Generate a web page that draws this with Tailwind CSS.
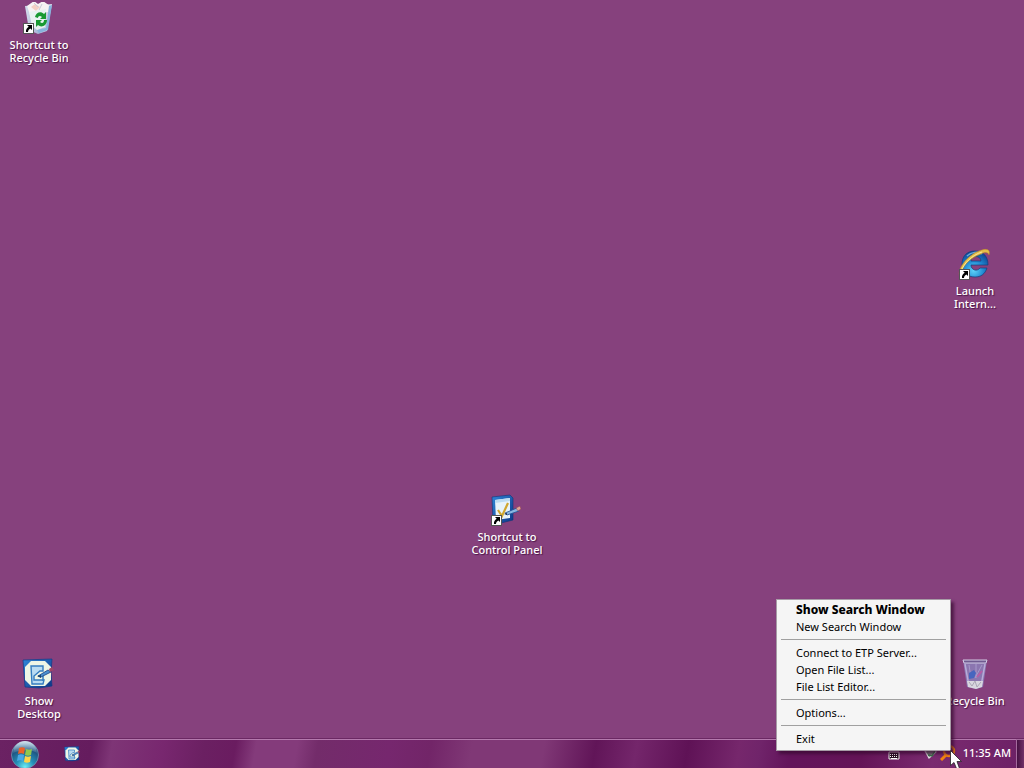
<!DOCTYPE html>
<html lang="en">
<head>
<meta charset="utf-8">
<title>Desktop</title>
<script src="https://cdn.jsdelivr.net/npm/@tailwindcss/browser@4"></script>
</head>
<body class="h-screen overflow-hidden bg-[#86417d] font-['Noto_Sans','Open_Sans',sans-serif] text-[11px] leading-[13px] text-white">

<svg class="absolute size-0" aria-hidden="true">
  <defs>
    <linearGradient id="blue" x1="0" y1="0" x2="1" y2="1"><stop offset="0" stop-color="#2f86d8"/><stop offset="1" stop-color="#0d3585"/></linearGradient>
    <linearGradient id="glass" x1="0" y1="0" x2="1" y2="0"><stop offset="0" stop-color="#dcecf8"/><stop offset=".5" stop-color="#a9c3e0"/><stop offset="1" stop-color="#e6eff8"/></linearGradient>
    <radialGradient id="ie" cx=".45" cy=".75" r=".75"><stop offset="0" stop-color="#5fd4fa"/><stop offset=".5" stop-color="#2089d2"/><stop offset="1" stop-color="#0f4390"/></radialGradient>
    <radialGradient id="orb" cx=".5" cy=".95" r=".95"><stop offset="0" stop-color="#6ff0f5"/><stop offset=".35" stop-color="#2590b8"/><stop offset=".75" stop-color="#1d4e7c"/><stop offset="1" stop-color="#7fa9c2"/></radialGradient>
    <linearGradient id="shine" x1="0" y1="0" x2="0" y2="1"><stop offset="0" stop-color="#e8f4fa" stop-opacity=".8"/><stop offset="1" stop-color="#b8d8e8" stop-opacity=".15"/></linearGradient>
    <symbol id="arrow" viewBox="0 0 11 11">
      <rect x=".5" y=".5" width="10" height="10" fill="#fff" stroke="#555"/>
      <path d="M4 2h5v5L7.400 5.400C5.800 6.200 5 7.400 5 9H3C2.600 6.700 3.800 4.800 5.700 3.700Z" fill="#000"/>
    </symbol>
    <symbol id="desk" viewBox="0 0 32 32">
      <path d="M1 2 30 1l-1 14 1 13-13 2-14-1-1-13Z" fill="url(#blue)" stroke="#123a85" stroke-width=".7"/>
      <path d="M9 3h14l6 6v13l-6 6H9l-6-6V9Z" fill="#eef6e6"/>
      <path d="M9 8h12v5h-3l-6 5v4h10l-1 4H10Z" fill="#b9dcf2" stroke="#347cc0" stroke-width="1.400"/>
      <path d="M21 17v6" stroke="#347cc0" stroke-width="1.500"/>
      <path d="m16 18 10-6 3 2-10 5Z" fill="#4a8fce" stroke="#173e80" stroke-width=".8"/>
      <path d="m27 11 3-2 2 3-4 2Z" fill="#a14566"/>
      <path d="m15 18 4-1v3Z" fill="#15406d"/>
    </symbol>
  </defs>
</svg>

<main class="relative h-full">

  <a href="#" class="absolute left-0 top-0 flex w-[78px] flex-col items-center gap-1 pt-[2px] text-center font-medium [text-shadow:1px_1px_1px_#4b1748]">
    <svg class="mr-[2px] size-8" viewBox="0 0 32 32">
      <path d="M3 4 30 2l-5 27-9 3-9-4Z" fill="url(#glass)" opacity=".9"/>
      <path d="m5 4 7-5 4 3 5-3 7 5-2 6-18 3Z" fill="#f7f3f4"/>
      <path d="m9 5 4-3 5 3-4 4Z" fill="#f4cfc5"/><path d="m12 1 4 4M20 2l-3 6" stroke="#c9cbd8" fill="none"/>
      <path d="M27 4 30 3 26 28l-9 3-2-3 9-2Z" fill="#87b4dd"/>
      <path d="m7 10 17-3-1 18-8 3-5-4Z" fill="#e7f2f1"/>
      <path d="M13 15c1-5 6-6 9-3l2-2v7h-6l2-2c-2-2-4-1-4 1ZM25 18c0 6-6 8-9 5l-2 2v-7h6l-2 2c2 2 4 1 4-2Z" fill="#189a32"/>
      <use href="#arrow" x="1" y="21" width="11" height="11"/>
    </svg>
    <span>Shortcut to<br>Recycle Bin</span>
  </a>

  <a href="#" class="absolute right-[10px] top-[246px] flex w-[78px] flex-col items-center gap-1 pt-[2px] text-center font-medium [text-shadow:1px_1px_1px_#4b1748]">
    <svg class="mr-[2px] size-8" viewBox="0 0 32 32">
      <path fill-rule="evenodd" d="M17 3c8 0 13 5 13 14H13c0 5 6 7 9 3h7c-2 6-6 9-12 9C9 29 4 24 4 16S9 3 17 3Zm-4 10h10c0-6-10-6-10 0Z" fill="url(#ie)" stroke="#123e7c" stroke-width=".7"/>
      <path d="M9 8c4-4 11-5 15-2" fill="none" stroke="#8fcdf0" stroke-width="1.500" opacity=".7"/>
      <path d="M2 29C-2 21 10 7 21 3c7-3 12-2 10 4-1-3-4-3-8-1C12 10 3 19 4 26Z" fill="#e4bd48" stroke="#b98524" stroke-width=".5"/>
      <path d="M3 24C5 16 14 7 24 4" fill="none" stroke="#f8e69a" stroke-width="1"/>
      <use href="#arrow" x="1" y="21" width="11" height="11"/>
    </svg>
    <span>Launch<br>Intern...</span>
  </a>

  <a href="#" class="absolute left-[468px] top-[492px] flex w-[78px] flex-col items-center gap-1 pt-[2px] text-center font-medium [text-shadow:1px_1px_1px_#4b1748]">
    <svg class="mr-[2px] size-8" viewBox="0 0 32 32">
      <path d="m2 3 18-2 3 3v22L7 30l-4-2Z" fill="url(#blue)" stroke="#0f3679" stroke-width=".6"/>
      <path d="m5 6 15-2v20L6 26Z" fill="#e8f3fa"/>
      <path d="m5 6 15-2v3L5 9Z" fill="#bddcf2"/>
      <path d="m8 16 4 6 6-13" fill="none" stroke="#d0a72f" stroke-width="2.200"/>
      <path d="m15 19 12-5 2 3-12 4Z" fill="#88b6e2" stroke="#224e91" stroke-width=".8"/>
      <path d="m26 14 4-2 1 3-3 2Z" fill="#e3a592" stroke="#893b52" stroke-width=".5"/>
      <path d="m14 20 3-1v2Z" fill="#263149"/>
      <use href="#arrow" x="1" y="21" width="11" height="11"/>
    </svg>
    <span>Shortcut to<br>Control Panel</span>
  </a>

  <a href="#" class="absolute bottom-[54px] left-0 flex h-[58px] w-[78px] flex-col items-center gap-1 pt-[2px] text-center font-medium [text-shadow:1px_1px_1px_#4b1748]">
    <svg class="mr-[2px] size-8 shrink-0" viewBox="0 0 32 32"><use href="#desk"/></svg>
    <span>Show<br>Desktop</span>
  </a>

  <a href="#" class="absolute bottom-[54px] right-[10px] flex h-[58px] w-[78px] flex-col items-center gap-1 pt-[2px] text-center font-medium [text-shadow:1px_1px_1px_#4b1748]">
    <svg class="mr-[2px] size-8 shrink-0" viewBox="0 0 32 32">
      <path d="m5 2 24 0-4 27-7 2-9-2Z" fill="#8c7cb6" opacity=".9"/>
      <path d="m5 2 24 0-1 3-22 0Z" fill="#6f5b91" stroke="#d3cbe5"/>
      <path d="m7 6 4 22M27 6l-4 22" stroke="#b7add8" stroke-width="1.500"/>
      <path d="m11 7 2 13M18 6v14M24 7l-7 13" stroke="#a799cb" stroke-width="1"/>
      <path d="m11 15 5-3 2 3-2 5-5 1Z" fill="#4766bf"/><path d="m19 19 5-6" stroke="#bd5ba6" stroke-width="1.500"/>
      <path d="m9 23 16 0-1 6-6 2-8-2Z" fill="#d9d7df"/>
      <path d="m11 24 3 4 3-5 2 6 4-5" fill="none" stroke="#aaa8b5"/>
    </svg>
    <span>Recycle Bin</span>
  </a>

  <footer class="absolute inset-x-0 bottom-0 flex h-[30px] items-stretch border-t border-[#6b2863] bg-[linear-gradient(100deg,#6b2263_0%,#651c5e_9%,#7e3576_11%,#78276f_16%,#6b2062_20%,#6a1c60_23%,#843b7b_25%,#843b7b_29%,#732c6a_31%,#76276e_38%,#722568_42%,#803876_46%,#803876_53%,#611558_58%,#74266b_62%,#5f1256_67%,#76276c_72%,#70246a_74%,#63145b_77%,#641457_84%,#7a2b70_91%,#6c2065_100%)]">
    <div class="flex flex-1 items-stretch border-t border-[#b57aae]">
      <button aria-label="Start" class="ml-[11px] size-7">
        <svg class="size-7" viewBox="0 0 28 28">
          <circle cx="14" cy="15" r="13.500" fill="url(#orb)" stroke="#7d9fb7" stroke-width=".7"/>
          <path d="M2 13C3-3 25-3 26 13 20 9 9 10 2 13Z" fill="url(#shine)"/>
          <path d="M8 8c2-1 4-1 6 0l-1 6c-2-1-4-1-6 0Z" fill="#eb6227"/>
          <path d="M15 9c2 1 4 1 6 0l-1 6c-2 1-4 1-6 0Z" fill="#91c84c"/>
          <path d="M7 15c2-1 4-1 6 0l-1 6c-2-1-4-1-6 0Z" fill="#4aa7e4"/>
          <path d="M14 16c2 1 4 1 6 0l-1 6c-2 1-4 1-6 0Z" fill="#ffd347"/>
        </svg>
      </button>
      <button aria-label="Show Desktop" class="ml-[25px] size-4 self-center pb-1"><svg class="size-4" viewBox="0 0 32 32"><use href="#desk"/></svg></button>
      <div class="ml-auto flex items-center pb-[3px]">
        <button aria-label="Keyboard" class="mr-[24px]">
          <svg class="h-4 w-[12px]" viewBox="0 0 12 16"><path d="M1 7h10v7H1Z" fill="#281022" stroke="#eee"/><path d="M2 9.500h8M2 11.500h8" stroke="#fff" stroke-dasharray="1 1"/><path d="M3 13.500h6" stroke="#fff"/></svg>
        </button>
        <button aria-label="Safely remove hardware"><svg class="size-4" viewBox="0 0 16 16"><path d="m1 6 4 7 7-6-2-3Z" fill="#777b78" stroke="#e0dfe0" stroke-width="1.200"/><path d="m4 10 4 1 3-5" fill="none" stroke="#39744b" stroke-width="1.500"/></svg></button>
        <button aria-label="Search"><svg class="size-4" viewBox="0 0 16 16"><circle cx="9" cy="6" r="5" fill="none" stroke="#f38310" stroke-width="2.400"/><path d="m6 10-5 5" stroke="#f38310" stroke-width="3"/></svg></button>
        <time class="ml-[7px] mr-[5px] font-medium">11:35 AM</time>
      </div>
    </div>
    <button aria-label="Show the desktop" class="w-2 border-l border-t border-[#a46a9d] bg-linear-to-r from-[#461043] to-[#713168]"></button>
  </footer>

  <nav aria-label="Search menu" class="absolute bottom-[17px] right-[73px] flex w-[175px] flex-col border border-[#a79ca6] bg-[#f5f5f5] py-[2px] text-black shadow-[3px_3px_3px_#35082fb0]">
    <button class="h-[17px] pb-[2px] pl-[19px] text-left text-xs leading-[15px] font-extrabold">Show Search Window</button>
    <button class="h-[17px] pb-[2px] pl-[19px] text-left">New Search Window</button>
    <hr class="mx-1 mb-[5px] mt-[3px] border-[#a0a0a0]">
    <button class="h-[17px] pb-[2px] pl-[19px] text-left">Connect to ETP Server...</button>
    <button class="h-[17px] pb-[2px] pl-[19px] text-left">Open File List...</button>
    <button class="h-[17px] pb-[2px] pl-[19px] text-left">File List Editor...</button>
    <hr class="mx-1 mb-[5px] mt-[3px] border-[#a0a0a0]">
    <button class="h-[17px] pb-[2px] pl-[19px] text-left">Options...</button>
    <hr class="mx-1 mb-[5px] mt-[3px] border-[#a0a0a0]">
    <button class="h-[17px] pb-[2px] pl-[19px] text-left">Exit</button>
  </nav>

  <svg class="pointer-events-none absolute bottom-0 right-[62px] h-[18px] w-3" viewBox="0 0 12 18"><path d="M.5.500v15l3.500-3 2.500 6h3l-2.500-7h4.500Z" fill="#fff" stroke="#222" stroke-width=".8"/></svg>
</main>
</body>
</html>
